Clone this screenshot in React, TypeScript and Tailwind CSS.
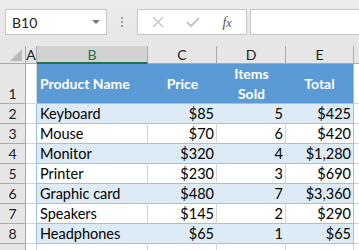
import React from "react";

const cols = [
  { key: "A", w: 11 },
  { key: "B", w: 111 },
  { key: "C", w: 69 },
  { key: "D", w: 69 },
  { key: "E", w: 68 },
];

const data = [
  ["Keyboard", "$85", "5", "$425"],
  ["Mouse", "$70", "6", "$420"],
  ["Monitor", "$320", "4", "$1,280"],
  ["Printer", "$230", "3", "$690"],
  ["Graphic card", "$480", "7", "$3,360"],
  ["Speakers", "$145", "2", "$290"],
  ["Headphones", "$65", "1", "$65"],
];

const cellFont = { fontFamily: "Lato, 'Open Sans', sans-serif" };

export default function App() {
  return (
    <div className="w-[359px] h-[250px] overflow-hidden bg-white" style={{ fontFamily: "'Noto Sans', sans-serif" }}>
      {/* Toolbar */}
      <div className="h-[46px] bg-gradient-to-b from-[#ececec] to-[#e6e6e6] flex items-start pt-[9px] pl-[5px]">
        <div className="w-[102px] h-[26px] bg-white border border-[#c6c6c6] flex items-center justify-between pl-[6px] pr-[6px]">
          <span className="text-[14px] text-[#222]" style={cellFont}>B10</span>
          <svg width="8" height="5" viewBox="0 0 8 5"><path d="M0 0 L8 0 L4 4 Z" fill="#777" /></svg>
        </div>
        <div className="w-[30px] h-[26px] flex flex-col items-center justify-center gap-[2px]">
          <div className="w-[2px] h-[2px] bg-[#9a9a9a]" />
          <div className="w-[2px] h-[2px] bg-[#9a9a9a]" />
          <div className="w-[2px] h-[2px] bg-[#9a9a9a]" />
        </div>
        <div className="w-[110px] h-[26px] bg-white border border-[#c6c6c6] flex items-center">
          <div className="w-[37px] flex justify-center pl-[2px]">
            <svg width="12" height="12" viewBox="0 0 12 12"><path d="M1 1 L11 11 M11 1 L1 11" stroke="#c4c4c4" strokeWidth="1.4" /></svg>
          </div>
          <div className="w-[36px] flex justify-center">
            <svg width="14" height="12" viewBox="0 0 14 12"><path d="M1 6 L5 10 L13 2" stroke="#c4c4c4" strokeWidth="2" fill="none" /></svg>
          </div>
          <div className="flex-1 flex justify-center pr-[3px]">
            <span className="text-[14px] italic text-[#555]" style={{ fontFamily: "'Liberation Serif', serif" }}>
              f<span className="text-[12px]">x</span>
            </span>
          </div>
        </div>
        <div className="ml-[3px] flex-1 h-[26px] bg-white border border-[#c6c6c6] border-r-0" />
      </div>

      {/* Column headers */}
      <div className="flex h-[18px] bg-[#e6e6e6] text-[14px] text-[#222]" style={cellFont}>
        <div className="w-[26px] relative border-r border-b border-[#ababab]">
          <svg className="absolute left-[10px] top-[3px]" width="12" height="12" viewBox="0 0 12 12"><path d="M12 0 L12 12 L0 12 Z" fill="#b9b9b9" /></svg>
        </div>
        {cols.map((c) => (
          <div
            key={c.key}
            style={{ width: c.w }}
            className={
              c.key === "B"
                ? "bg-[#d2d2d2] border-r border-[#ababab] border-b-2 border-b-[#217346] text-[#217346] flex items-center justify-center leading-none pt-[1px]"
                : "border-r border-b border-[#ababab] flex items-center justify-center leading-none pt-[1px]"
            }
          >
            {c.key}
          </div>
        ))}
        <div className="flex-1 border-b border-[#ababab]" />
      </div>

      {/* Row 1 header */}
      <div className="flex h-[40px] text-[14px]" style={cellFont}>
        <RowNum n={1} h={40} />
        <div className="w-[11px] border-r border-[#d4d4d4] border-b border-b-[#d4d4d4]" />
        <div className="w-[111px] bg-[#5b9bd5] text-white font-bold flex items-center pl-[3px] border-b border-[#9bc2e6]">Product Name</div>
        <div className="w-[69px] bg-[#5b9bd5] text-white font-bold flex items-center justify-center border-b border-[#9bc2e6]">Price</div>
        <div className="w-[69px] bg-[#5b9bd5] text-white font-bold flex flex-col items-center justify-center leading-[20px] border-b border-[#9bc2e6]">
          <span>Items</span>
          <span>Sold</span>
        </div>
        <div className="w-[68px] bg-[#5b9bd5] text-white font-bold flex items-center justify-center border-b border-r border-[#9bc2e6]">Total</div>
        <div className="flex-1 border-b border-[#d4d4d4]" />
      </div>

      {data.map((r, i) => {
        const band = i % 2 === 0;
        const bg = band ? "bg-[#ddebf7]" : "bg-white";
        const inner = band ? "border-r-transparent" : "border-r-[#d4d4d4]";
        return (
          <div key={i} className="flex h-[20px] text-[14.5px] text-black" style={cellFont}>
            <RowNum n={i + 2} h={20} />
            <div className="w-[11px] border-r border-r-[#9bc2e6] border-b border-b-[#d4d4d4]" />
            <div className={`w-[111px] ${bg} border-r ${inner} border-b border-b-[#9bc2e6] flex items-end pl-[3px] leading-[18px]`}>{r[0]}</div>
            <div className={`w-[69px] ${bg} border-r ${inner} border-b border-b-[#9bc2e6] flex items-end justify-end pr-[2px] leading-[18px]`}>{r[1]}</div>
            <div className={`w-[69px] ${bg} border-r ${inner} border-b border-b-[#9bc2e6] flex items-end justify-end pr-[2px] leading-[18px]`}>{r[2]}</div>
            <div className={`w-[68px] ${bg} border-r border-r-[#9bc2e6] border-b border-b-[#9bc2e6] flex items-end justify-end pr-[2px] leading-[18px]`}>{r[3]}</div>
            <div className="flex-1 border-b border-[#d4d4d4]" />
          </div>
        );
      })}

      <div className="flex h-[20px]">
        <div className="w-[26px] h-[20px] bg-[#e6e6e6] border-r border-[#ababab]" />
        <div className="w-[11px] border-r border-[#d4d4d4]" />
        <div className="w-[111px] border-r border-[#d4d4d4]" />
        <div className="w-[69px] border-r border-[#d4d4d4]" />
        <div className="w-[69px] border-r border-[#d4d4d4]" />
        <div className="w-[68px] border-r border-[#d4d4d4]" />
      </div>
    </div>
  );
}

function RowNum({ n, h }: { n: number; h: number }) {
  return (
    <div
      style={{ height: h, fontFamily: "Lato, sans-serif" }}
      className="w-[26px] bg-[#e6e6e6] border-r border-b border-[#ababab] text-[14px] text-[#222] flex items-end justify-center leading-[18px]"
    >
      {n}
    </div>
  );
}
